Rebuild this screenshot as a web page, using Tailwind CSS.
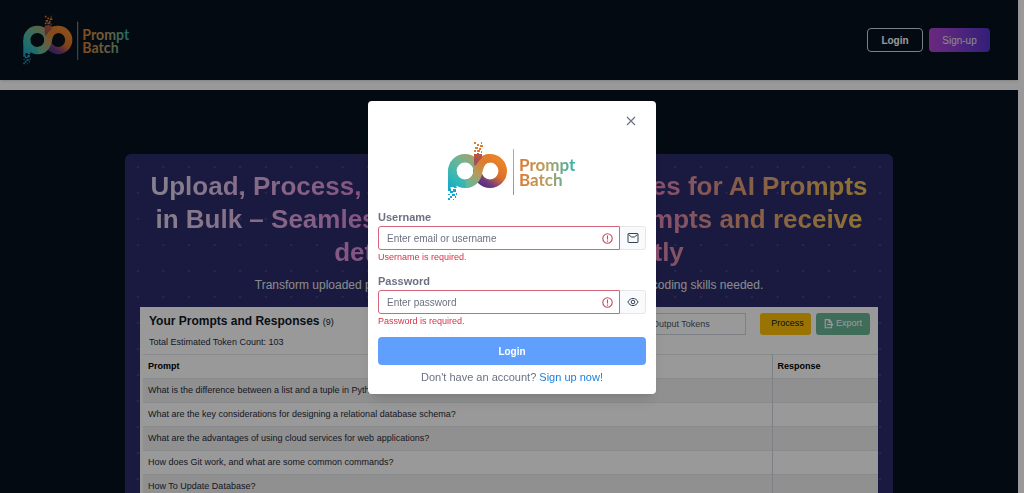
<!DOCTYPE html>
<html lang="en">
<head>
    <meta charset="UTF-8" />
    <meta name="viewport" content="width=device-width, initial-scale=1.0" />
    <script src="https://cdn.jsdelivr.net/npm/@tailwindcss/browser@4"></script>
    <title>Prompt Batch</title>
</head>
<body class="h-screen overflow-hidden bg-white font-['Liberation_Sans',Arial,sans-serif] text-[10px]">

    <!-- Logo symbols -->
    <svg class="absolute size-0" aria-hidden="true">
        <defs>
            <linearGradient id="ring-p" gradientUnits="userSpaceOnUse" x1="2" y1="50" x2="30" y2="14">
                <stop offset="0" stop-color="#16a5cf" />
                <stop offset="0.3" stop-color="#35b8b4" />
                <stop offset="0.65" stop-color="#6fb494" />
                <stop offset="1" stop-color="#b99a5c" />
            </linearGradient>
            <linearGradient id="ring-b" gradientUnits="userSpaceOnUse" x1="32" y1="46" x2="50" y2="20">
                <stop offset="0" stop-color="#4b2a86" />
                <stop offset="0.25" stop-color="#6f3a80" />
                <stop offset="0.6" stop-color="#d96f2b" />
                <stop offset="1" stop-color="#e8832a" />
            </linearGradient>
            <linearGradient id="stem" gradientUnits="userSpaceOnUse" x1="0" y1="11" x2="0" y2="28">
                <stop offset="0" stop-color="#c9573c" />
                <stop offset="0.6" stop-color="#9a4f58" />
                <stop offset="1" stop-color="#b9794c" />
            </linearGradient>
            <linearGradient id="cross" gradientUnits="userSpaceOnUse" x1="20" y1="44" x2="38" y2="16">
                <stop offset="0" stop-color="#62b89b" />
                <stop offset="0.45" stop-color="#b79a5a" />
                <stop offset="0.8" stop-color="#dd7c2e" />
                <stop offset="1" stop-color="#e07d2c" />
            </linearGradient>
            <linearGradient id="word" gradientUnits="userSpaceOnUse" x1="71" y1="0" x2="128" y2="0">
                <stop offset="0" stop-color="#de7a2e" />
                <stop offset="0.5" stop-color="#b5a065" />
                <stop offset="1" stop-color="#2fb3ac" />
            </linearGradient>
            <linearGradient id="rule" x1="0" y1="0" x2="0" y2="1">
                <stop offset="0" stop-color="#e0a468" />
                <stop offset="1" stop-color="#45b8ae" />
            </linearGradient>
        </defs>
        <symbol id="logo" viewBox="0 0 128 60">
            <circle cx="42" cy="30" r="12.700" fill="none" stroke="url(#ring-b)" stroke-width="8.600" />
            <circle cx="17" cy="30" r="12.700" fill="none" stroke="url(#ring-p)" stroke-width="8.600" />
            <path fill="url(#ring-p)" d="M0 30h8.600v17h-3v-1h-3v2h-2.600z" />
            <path fill="url(#stem)" d="M26 13h3v-1h2v1h3v10l-5 6l-3-5z" />
            <path fill="none" stroke="url(#cross)" stroke-width="8.600" d="M18 42.700C27 42 29 36 30.500 29C32 22 36 17.300 42 17.300" />
            <path fill="url(#stem)" d="M26 13h8v4c-3 2-5 5-6 8l-2-3z" />
            <path fill="#e07d2c" d="M26 1h2v2h-2zM29 3h2v2h-2zM33 1h1v2h-1zM32 4h3v2h-3zM27 6h3v2h-3zM31 7h2v2h-2zM26 9h2v2h-2zM29 9h3v2h-3zM33 10h1v2h-1z" />
            <path fill="#16a5cf" d="M0 48h3v2h-3zM5 48h3v3h-3zM2 50h3v2h-3zM8 52h1v2h-1zM0 53h2v1h-2zM4 53h3v2h-3zM2 55h2v2h-2zM7 55h1v2h-1zM0 57h2v2h-2zM5 58h1v1h-1z" />
            <rect x="65" y="8" width="1" height="46" fill="url(#rule)" />
        </symbol>
    </svg>

    <div class="pr-1.5">
        <header class="flex h-20 items-center justify-between bg-[#05121f] pr-7 pl-[23px] shadow-sm">
            <a href="#" aria-label="Prompt Batch">
                <svg class="h-[50px] w-[107px] overflow-visible font-[Lato,sans-serif] text-[17px] font-bold" viewBox="0 0 128 60">
                    <use href="#logo" width="128" height="60" />
                    <g fill="url(#word)">
                        <text x="71" y="30">Prompt</text>
                        <text x="71" y="45">Batch</text>
                    </g>
                </svg>
            </a>
            <nav class="flex gap-1.5">
                <button class="h-6 w-14 rounded border border-gray-300 font-bold text-white">Login</button>
                <button class="h-6 w-[61px] rounded bg-linear-to-r from-[#b443d4] to-[#5433c8] text-gray-200">Sign-up</button>
            </nav>
        </header>

        <main class="mt-2.5 bg-[#05121f] px-4 pt-16">
            <section class="mx-auto h-screen max-w-[768px] rounded-md bg-[#2c2a69] bg-[radial-gradient(circle,#46447f_1px,transparent_1px)] bg-[size:calc(100%/30)_26px] px-[15px] pt-4">
                <h1 class="bg-[linear-gradient(90deg,#e0dcee,#dd7fd6_35%,#dd85b8_70%,#dd9880_80%,#f0c44c)] bg-clip-text text-center text-[26px] leading-[33px] font-bold text-transparent">
                    Upload, Process, and Generate Responses for AI Prompts in Bulk – Seamlessly submit your AI prompts and receive detailed responses instantly
                </h1>
                <p class="mt-1.5 text-center text-xs leading-5 text-gray-200">
                    Transform uploaded prompts into comprehensive responses instantly – no coding skills needed.
                </p>

                <!-- Prompts table -->
                <div class="mt-3 bg-white pl-[3px] text-[9px] text-gray-800">
                    <div class="flex h-[47px] justify-between pr-2 pl-1.5">
                        <div class="pt-1.5">
                            <h2 class="text-xs leading-4 font-bold text-gray-900">Your Prompts and Responses <span class="text-[9px] font-normal">(9)</span></h2>
                            <p class="mt-1.5 leading-3">Total Estimated Token Count: 103</p>
                        </div>
                        <div class="flex pt-1.5">
                            <input type="text" aria-label="Output Tokens" placeholder="Output Tokens" class="mr-3.5 h-[22px] w-[105px] border border-gray-300 px-2.5 placeholder:text-gray-600" />
                            <button class="mr-[5px] h-[22px] w-[51px] rounded-[3px] bg-[#ffc107] pl-1 text-gray-900">Process</button>
                            <button class="flex h-[22px] w-[54px] items-center justify-center gap-0.5 rounded-[3px] bg-[#6cb696] text-white">
                                <svg class="size-2.5" viewBox="0 0 16 16" fill="none" stroke="currentColor" stroke-width="1.800">
                                    <path d="M12 6V5L8.500 1H2v13h10v-2M8 1v4h4M5 9h9M11.500 6.500L14 9l-2.500 2.500" />
                                </svg>
                                Export
                            </button>
                        </div>
                    </div>
                    <table class="w-full table-fixed border-collapse text-left">
                        <thead>
                            <tr class="h-6 border-y border-gray-200 text-black">
                                <th class="px-[5px]">Prompt</th>
                                <th class="w-[106px] border-l border-gray-300 px-[5px]">Response</th>
                            </tr>
                        </thead>
                        <tbody>
                            <tr class="h-6 border-b border-gray-200 bg-[#f1f1f1]">
                                <td class="px-[5px]">What is the difference between a list and a tuple in Python?</td>
                                <td class="border-l border-gray-300"></td>
                            </tr>
                            <tr class="h-6 border-b border-gray-200">
                                <td class="px-[5px]">What are the key considerations for designing a relational database schema?</td>
                                <td class="border-l border-gray-300"></td>
                            </tr>
                            <tr class="h-6 border-b border-gray-200 bg-[#f1f1f1]">
                                <td class="px-[5px]">What are the advantages of using cloud services for web applications?</td>
                                <td class="border-l border-gray-300"></td>
                            </tr>
                            <tr class="h-6 border-b border-gray-200">
                                <td class="px-[5px]">How does Git work, and what are some common commands?</td>
                                <td class="border-l border-gray-300"></td>
                            </tr>
                            <tr class="h-6 border-b border-gray-200 bg-[#f1f1f1]">
                                <td class="px-[5px]">How To Update Database?</td>
                                <td class="border-l border-gray-300"></td>
                            </tr>
                        </tbody>
                    </table>
                </div>
            </section>
        </main>
    </div>

    <!-- Login modal -->
    <div class="fixed inset-0 flex items-start justify-center bg-black/40 pt-[101px]">
        <div role="dialog" aria-modal="true" aria-label="Login" class="w-72 rounded bg-white px-2.5 pb-[9px] shadow-lg">
            <div class="flex h-10 items-center justify-end pr-2.5">
                <button aria-label="Close" class="text-gray-500">
                    <svg class="size-2.5" viewBox="0 0 10 10" fill="none" stroke="currentColor" stroke-width="1.200"><path d="M1 1l8 8M9 1l-8 8" /></svg>
                </button>
            </div>
            <svg class="mx-auto h-[60px] w-32 overflow-visible font-[Lato,sans-serif] text-[17px] font-bold" viewBox="0 0 128 60">
                <use href="#logo" width="128" height="60" />
                <g fill="url(#word)">
                    <text x="71" y="30">Prompt</text>
                    <text x="71" y="45">Batch</text>
                </g>
            </svg>

            <form>
                <label for="username" class="mt-2 block text-[11px] leading-4 font-bold text-gray-500">Username</label>
                <div class="mt-px flex h-6">
                    <div class="flex flex-1 items-center rounded-l-[3px] border border-[#d4667a] pr-1.5">
                        <input id="username" type="text" placeholder="Enter email or username" class="h-full min-w-0 flex-1 px-2 outline-none placeholder:text-gray-500" />
                        <svg class="size-[11px] text-[#d0485c]" viewBox="0 0 11 11" fill="none" stroke="currentColor" stroke-width="1.100"><circle cx="5.500" cy="5.500" r="4.700" /><path d="M5.500 2.500v4M5.500 7.500v1.200" /></svg>
                    </div>
                    <span class="flex w-[26px] items-center justify-center rounded-r-[3px] border border-l-0 border-gray-200 bg-gray-50 text-gray-700">
                        <svg class="size-3" viewBox="0 0 12 12" fill="none" stroke="currentColor"><rect x="1" y="1.500" width="10" height="9" rx="0.500" /><path d="M1.500 2.500L4.500 5h3l3-2.500" /></svg>
                    </span>
                </div>
                <p class="mt-px text-[9px] leading-3 text-[#d63342]">Username is required.</p>

                <label for="password" class="mt-2.5 block text-[11px] leading-4 font-bold text-gray-500">Password</label>
                <div class="mt-px flex h-6">
                    <div class="flex flex-1 items-center rounded-l-[3px] border border-[#d4667a] pr-1.5">
                        <input id="password" type="password" placeholder="Enter password" class="h-full min-w-0 flex-1 px-2 outline-none placeholder:text-gray-500" />
                        <svg class="size-[11px] text-[#d0485c]" viewBox="0 0 11 11" fill="none" stroke="currentColor" stroke-width="1.100"><circle cx="5.500" cy="5.500" r="4.700" /><path d="M5.500 2.500v4M5.500 7.500v1.200" /></svg>
                    </div>
                    <button type="button" aria-label="Show password" class="flex w-[26px] items-center justify-center rounded-r-[3px] border border-l-0 border-gray-200 bg-gray-50 text-gray-700">
                        <svg class="size-3" viewBox="0 0 12 12" fill="none" stroke="currentColor"><path d="M0.900 6C3.200 1.200 8.800 1.200 11.100 6C8.800 10.800 3.200 10.800 0.900 6z" /><circle cx="6" cy="6" r="1.800" /></svg>
                    </button>
                </div>
                <p class="mt-px text-[9px] leading-3 text-[#d63342]">Password is required.</p>

                <button type="submit" class="mt-2.5 h-7 w-full rounded bg-[#619fff] font-bold text-white">Login</button>
            </form>
            <p class="mt-1 text-center text-[11px] leading-4 text-gray-500">Don't have an account? <a href="#" class="text-[#1a7fdc]">Sign up now!</a></p>
        </div>
    </div>

</body>
</html>
